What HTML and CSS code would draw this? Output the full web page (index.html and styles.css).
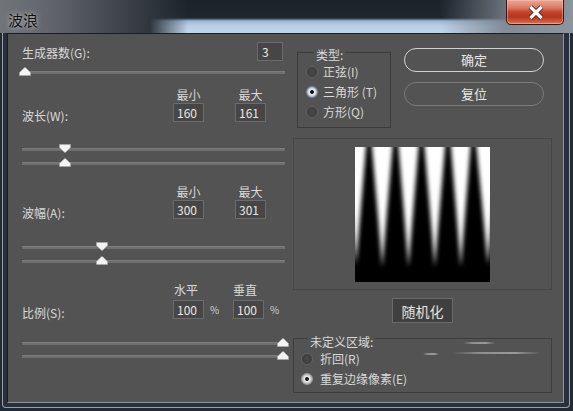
FILE: index.html
```html
<!DOCTYPE html>
<html lang="zh">
<head>
<meta charset="utf-8">
<title>波浪</title>
<link rel="stylesheet" href="styles.css">
</head>
<body>
<div class="window">
  <div class="titlebar">
    <span class="title">波浪</span>
    <button class="close" aria-label="关闭">
      <svg width="16" height="15" viewBox="0 0 16 15">
        <path d="M2.5 2 L13.5 13 M13.5 2 L2.5 13" stroke="#5a1a0e" stroke-width="5.2" fill="none"/>
        <path d="M2.5 2 L13.5 13 M13.5 2 L2.5 13" stroke="#ffffff" stroke-width="3.2" fill="none"/>
      </svg>
    </button>
  </div>
  <div class="frame">
    <div class="client">
      <div class="left">
        <div class="gen-row">
          <span class="gen-label">生成器数(G):</span>
          <span class="field gen-field">3</span>
        </div>
        <div class="slider single">
          <div class="track t1"></div>
          <span class="thumb up th1" style="left:-3px"><svg width="12" height="9" viewBox="0 0 12 9"><path d="M0.5 8.5V5.6L5.1 0.9Q6 0.1 6.9 0.9L11.5 5.6V8.5Z"/></svg></span>
        </div>

        <div class="heads hd1"><span class="head">最小</span><span class="head h2">最大</span></div>
        <div class="param pr1">
          <span class="plabel">波长(W):</span>
          <span class="field">160</span>
          <span class="field f2">161</span>
        </div>
        <div class="slider dual d1">
          <div class="track t1"></div>
          <div class="track t2"></div>
          <span class="thumb down th1" style="left:37px"><svg width="12" height="9" viewBox="0 0 12 9"><path d="M0.5 8.5V5.6L5.1 0.9Q6 0.1 6.9 0.9L11.5 5.6V8.5Z"/></svg></span>
          <span class="thumb up th2" style="left:37px"><svg width="12" height="9" viewBox="0 0 12 9"><path d="M0.5 8.5V5.6L5.1 0.9Q6 0.1 6.9 0.9L11.5 5.6V8.5Z"/></svg></span>
        </div>

        <div class="heads hd2"><span class="head">最小</span><span class="head h2">最大</span></div>
        <div class="param pr2">
          <span class="plabel">波幅(A):</span>
          <span class="field">300</span>
          <span class="field f2">301</span>
        </div>
        <div class="slider dual d2">
          <div class="track t1"></div>
          <div class="track t2"></div>
          <span class="thumb down th1" style="left:74px"><svg width="12" height="9" viewBox="0 0 12 9"><path d="M0.5 8.5V5.6L5.1 0.9Q6 0.1 6.9 0.9L11.5 5.6V8.5Z"/></svg></span>
          <span class="thumb up th2" style="left:74px"><svg width="12" height="9" viewBox="0 0 12 9"><path d="M0.5 8.5V5.6L5.1 0.9Q6 0.1 6.9 0.9L11.5 5.6V8.5Z"/></svg></span>
        </div>

        <div class="heads hd3"><span class="head s1">水平</span><span class="head s2">垂直</span></div>
        <div class="param pr3">
          <span class="plabel">比例(S):</span>
          <span class="field">100</span>
          <span class="pct">%</span>
          <span class="field f3">100</span>
          <span class="pct">%</span>
        </div>
        <div class="slider dual d3">
          <div class="track t1"></div>
          <div class="track t2"></div>
          <span class="thumb up th1" style="left:255px"><svg width="12" height="9" viewBox="0 0 12 9"><path d="M0.5 8.5V5.6L5.1 0.9Q6 0.1 6.9 0.9L11.5 5.6V8.5Z"/></svg></span>
          <span class="thumb up th2" style="left:255px"><svg width="12" height="9" viewBox="0 0 12 9"><path d="M0.5 8.5V5.6L5.1 0.9Q6 0.1 6.9 0.9L11.5 5.6V8.5Z"/></svg></span>
        </div>
      </div>

      <div class="right">
        <div class="top-row">
          <fieldset class="group type">
            <legend>类型:</legend>
            <div class="radio"><span class="dot"></span>正弦(I)</div>
            <div class="radio"><span class="dot on blue"></span>三角形 (T)</div>
            <div class="radio"><span class="dot"></span>方形(Q)</div>
          </fieldset>
          <div class="buttons">
            <button class="btn primary">确定</button>
            <button class="btn">复位</button>
          </div>
        </div>

        <div class="preview">
          <svg class="wave" width="135" height="135" viewBox="0 0 135 135">
            <defs>
              <filter id="blur" x="-30%" y="-30%" width="160%" height="160%">
                <feGaussianBlur stdDeviation="2.1"/>
              </filter>
              <clipPath id="clip"><rect width="135" height="135"/></clipPath>
            </defs>
            <rect width="135" height="135" fill="#000"/>
            <g clip-path="url(#clip)">
              <g fill="#fff" filter="url(#blur)">
                <polygon points="-9,-10 11,-10 11,0 1,118 -9,0"/>
                <polygon points="17,-10 37.5,-10 37.5,0 27.3,120 17,0"/>
                <polygon points="43.5,-10 63.5,-10 63.5,0 53.5,120 43.5,0"/>
                <polygon points="69.5,-10 90,-10 90,0 79.8,120 69.5,0"/>
                <polygon points="96,-10 115.5,-10 115.5,0 105.8,120 96,0"/>
                <polygon points="121.5,-10 143,-10 143,0 133,118 121.5,0"/>
              </g>
            </g>
          </svg>
        </div>

        <button class="random">随机化</button>

        <fieldset class="group undef">
          <legend>未定义区域:</legend>
          <div class="radio"><span class="dot"></span>折回(R)</div>
          <div class="radio"><span class="dot on gray"></span>重复边缘像素(E)</div>
        </fieldset>

        <span class="glint g1"></span>
        <span class="glint g2"></span>
        <span class="glint g3"></span>
      </div>
    </div>
  </div>
</div>
</body>
</html>
```

FILE: styles.css
```css
* { box-sizing: border-box; }

html, body {
  margin: 0;
  padding: 0;
  background: #1f262e;
}

body {
  font-family: "Noto Sans CJK SC", "Noto Sans", "Liberation Sans", sans-serif;
  font-size: 12px;
  color: #d9d9d9;
}

.window {
  width: 573px;
  height: 411px;
  display: flex;
  flex-direction: column;
  background: #232a33;
  overflow: hidden;
}

/* ---------- title bar ---------- */
.titlebar {
  height: 33px;
  flex: 0 0 33px;
  display: flex;
  align-items: flex-start;
  background:
    linear-gradient(90deg, #71757a 0px, #60646a 55px, #474c52 105px, #30363d 150px, rgba(32,38,46,0) 188px),
    linear-gradient(90deg, rgba(40,48,58,0) 440px, rgba(118,128,139,0.85) 505px, #8c96a0 573px),
    linear-gradient(180deg, #1c222a 0px, #20272f 18px, #9fb9d3 21px, #b9cfe6 26px, #c3d6ea 33px);
}

.title {
  padding: 12px 0 0 8px;
  font-size: 15px;
  line-height: 15px;
  color: #121212;
  text-shadow: 0 0 6px rgba(255,255,255,0.55), 0 0 2px rgba(255,255,255,0.4);
}

.close {
  margin-left: auto;
  margin-right: 9px;
  width: 58px;
  height: 25px;
  padding: 0;
  border: 1px solid #3b1710;
  border-top: none;
  border-radius: 0 0 5px 5px;
  background: linear-gradient(180deg, #eaa999 0%, #da7b64 32%, #c3442b 50%, #b5361f 70%, #d0593c 90%, #e0805f 100%);
  box-shadow: inset 0 0 0 1px rgba(255,200,185,0.45);
  display: flex;
  align-items: center;
  justify-content: center;
}

.close svg { display: block; margin-left: 2px; }

/* ---------- frame ---------- */
.frame {
  flex: 1;
  margin: 0 3px 3px 2px;
  padding: 0 5px 4px 4px;
  border: 1px solid #96a2ae;
  border-top: none;
  border-radius: 0 0 4px 4px;
  background: #28313b;
  display: flex;
}

.client {
  flex: 1;
  display: flex;
  background: #535353;
  border-top: 1px solid #1a1e23;
  border-left: 1px solid #1a1e23;
  border-right: 1px solid #8b96a1;
  border-bottom: 1px solid #8b96a1;
}

/* ---------- left column ---------- */
.left {
  width: 285px;
  flex: 0 0 285px;
  padding: 8px 0 0 14px;
  display: flex;
  flex-direction: column;
}

.gen-row {
  height: 19px;
  display: flex;
  align-items: center;
}

.gen-label {
  flex: 1;
  line-height: 14px;
  padding-top: 2px;
}

.field {
  display: inline-block;
  width: 31px;
  height: 19px;
  border: 1px solid #6b6b6b;
  background: #464646;
  color: #e8e8e8;
  line-height: 17px;
  padding-left: 3px;
  font-size: 12px;
}

.gen-field {
  width: 26px;
  margin-right: 10px;
  padding-left: 4px;
}

.slider {
  position: relative;
  width: 263px;
}

.slider.single { margin-top: 5px; height: 12px; }
.slider.dual { height: 26px; }
.slider.d1 { margin-top: 20px; }
.slider.d2 { margin-top: 21px; }
.slider.d3 { margin-top: 17px; }

.track {
  position: absolute;
  left: 0;
  right: 0;
  height: 3px;
  background: #6f6f6f;
  border-top: 1px solid #7c7c7c;
}

.track.t1 { top: 5px; }
.track.t2 { top: 19px; }
.d3 .track.t2 { top: 18px; }

.thumb {
  position: absolute;
  width: 12px;
  height: 9px;
}

.thumb svg { display: block; }
.thumb path { fill: #f3f3f3; stroke: #a8a8a8; stroke-width: 0.7; }
.thumb.down svg { transform: rotate(180deg); }

.thumb.th1 { top: 1px; }
.thumb.th2 { top: 15px; }
.d3 .thumb.th1 { top: 1px; }
.d3 .thumb.th2 { top: 14px; }

.heads {
  display: flex;
  padding-left: 151px;
  line-height: 14px;
  height: 14px;
}

.head {
  width: 31px;
  text-align: center;
}

.head.h2 { margin-left: 31px; }
.head.s1 { text-align: left; padding-left: 1px; }
.head.s2 { margin-left: 29px; text-align: left; }

.hd1 { margin-top: 10px; }
.hd2 { margin-top: 16px; }
.hd3 { margin-top: 16px; }

.param {
  display: flex;
  align-items: flex-start;
}

.pr1 { margin-top: 1px; }
.pr2 { margin-top: 1px; }
.pr3 { margin-top: 3px; }

.plabel {
  flex: 0 0 151px;
  padding-top: 6px;
  line-height: 14px;
}

.field.f2 { margin-left: 31px; }
.field.f3 { margin-left: 16px; }

.pct {
  margin-left: 6px;
  width: 7px;
  font-size: 10px;
  line-height: 19px;
  color: #d0d0d0;
}

/* ---------- right column ---------- */
.right {
  position: relative;
  width: 259px;
  flex: 0 0 259px;
  padding-top: 8px;
  display: flex;
  flex-direction: column;
}

.top-row {
  display: flex;
  align-items: flex-start;
}

.group {
  margin: 0;
  border: 1px solid #3c3c3c;
  min-width: 0;
}

.group legend {
  font-size: 12px;
  line-height: 14px;
  color: #d9d9d9;
}

.type {
  margin-left: 4px;
  width: 94px;
  padding: 0 0 5px 8px;
}

.type legend {
  margin-left: 8px;
  padding: 6px 2px 0;
}

.radio {
  height: 20px;
  display: flex;
  align-items: center;
  line-height: 14px;
  white-space: nowrap;
}

.type .radio { gap: 5px; }
.undef .radio { gap: 7px; }

.dot {
  width: 12px;
  height: 12px;
  flex: 0 0 12px;
  border-radius: 50%;
  background: radial-gradient(circle at 50% 45%, #4a4a4a 0, #3c3c3c 70%);
  border: 1px solid #626262;
}

.dot.on.blue {
  border-color: #7d8aa0;
  background: radial-gradient(circle, #1b1b1b 0, #1b1b1b 1.6px, #f6f6f6 2.3px, #e4e9f1 3px, #b9c5d8 4.2px, #8997b0 6px);
}

.dot.on.gray {
  border-color: #9a9a9a;
  background: radial-gradient(circle, #262626 0, #262626 1.6px, #f2f2f2 2.3px, #dcdcdc 3.2px, #bdbdbd 4.5px, #9f9f9f 6px);
}

.buttons {
  margin-left: 13px;
  margin-top: 6px;
  display: flex;
  flex-direction: column;
}

.btn {
  width: 140px;
  height: 24px;
  border-radius: 12px;
  border: 1.5px solid #7b7b7b;
  background: #535353;
  color: #e6e6e6;
  font-family: "Noto Sans CJK SC", "Noto Sans", sans-serif;
  font-size: 13px;
  line-height: 20px;
  padding: 0;
}

.btn + .btn { margin-top: 10px; }
.btn.primary { border-color: #d2d2d2; }

.preview {
  margin-top: 10px;
  height: 152px;
  border: 1px solid #464646;
  display: flex;
  align-items: center;
  justify-content: center;
}

.wave { display: block; }

.random {
  align-self: center;
  margin-top: 8px;
  width: 61px;
  height: 25px;
  padding: 0;
  border: 1px solid #6a6a6a;
  background: #3f3f3f;
  color: #e4e4e4;
  font-family: "Noto Sans CJK SC", "Noto Sans", sans-serif;
  font-size: 14px;
  line-height: 22px;
}

.undef {
  margin-top: 4px;
  width: 259px;
  padding: 0 0 3px 7px;
}

.undef legend {
  margin-left: 7px;
  padding: 8px 2px 0;
}

.glint {
  position: absolute;
  height: 2px;
  background: linear-gradient(90deg, rgba(150,150,150,0), #8e8e8e 30%, #9a9a9a 70%, rgba(150,150,150,0));
}

.g1 { left: 170px; top: 308px; width: 32px; }
.g2 { left: 130px; top: 319px; width: 16px; }
.g3 { left: 160px; top: 318px; width: 88px; }
```
